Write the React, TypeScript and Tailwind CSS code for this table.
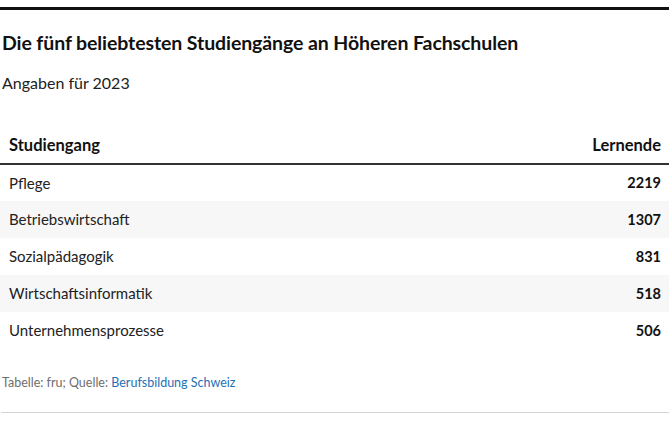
import React from 'react';

const rows = [
  { name: 'Pflege', value: 2219 },
  { name: 'Betriebswirtschaft', value: 1307 },
  { name: 'Sozialpädagogik', value: 831 },
  { name: 'Wirtschaftsinformatik', value: 518 },
  { name: 'Unternehmensprozesse', value: 506 },
];

export default function App() {
  return (
    <div className="w-[669px] h-[421px] bg-white pt-[7px] font-['Lato',sans-serif] text-[#111]">
      <div className="h-[3px] bg-[#111]" />

      <h1 className="mt-[22px] pl-[2px] text-[19.5px] font-bold leading-[22px] tracking-[-0.1px]">
        Die fünf beliebtesten Studiengänge an Höheren Fachschulen
      </h1>
      <p className="mt-[19px] pl-[2px] text-[16px] leading-[20px] text-[#222]">Angaben für 2023</p>

      <table className="mt-[35px] w-full border-collapse text-[15px]">
        <thead>
          <tr className="border-b-2 border-[#333]">
            <th className="h-[36px] pl-[9px] text-left text-[16.5px] font-bold align-middle">Studiengang</th>
            <th className="h-[36px] pr-[8px] text-right text-[16.5px] font-bold align-middle">Lernende</th>
          </tr>
        </thead>
        <tbody>
          {rows.map((r, i) => (
            <tr key={r.name} className={i % 2 === 1 ? 'bg-[#f7f7f7]' : ''}>
              <td className="h-[37px] pl-[9px] text-[#222] align-middle">{r.name}</td>
              <td className="h-[37px] pr-[8px] text-right text-[14.5px] font-bold align-middle">{r.value}</td>
            </tr>
          ))}
        </tbody>
      </table>

      <div className="mt-[26px] pl-[2px] text-[12.5px] leading-[16px] text-[#6e6e6e]">
        Tabelle: fru; Quelle: <span className="text-[#1f6fb5]">Berufsbildung Schweiz</span>
      </div>
      <div className="mt-[21px] ml-[1px] h-px bg-[#d4d4d4]" />
    </div>
  );
}
